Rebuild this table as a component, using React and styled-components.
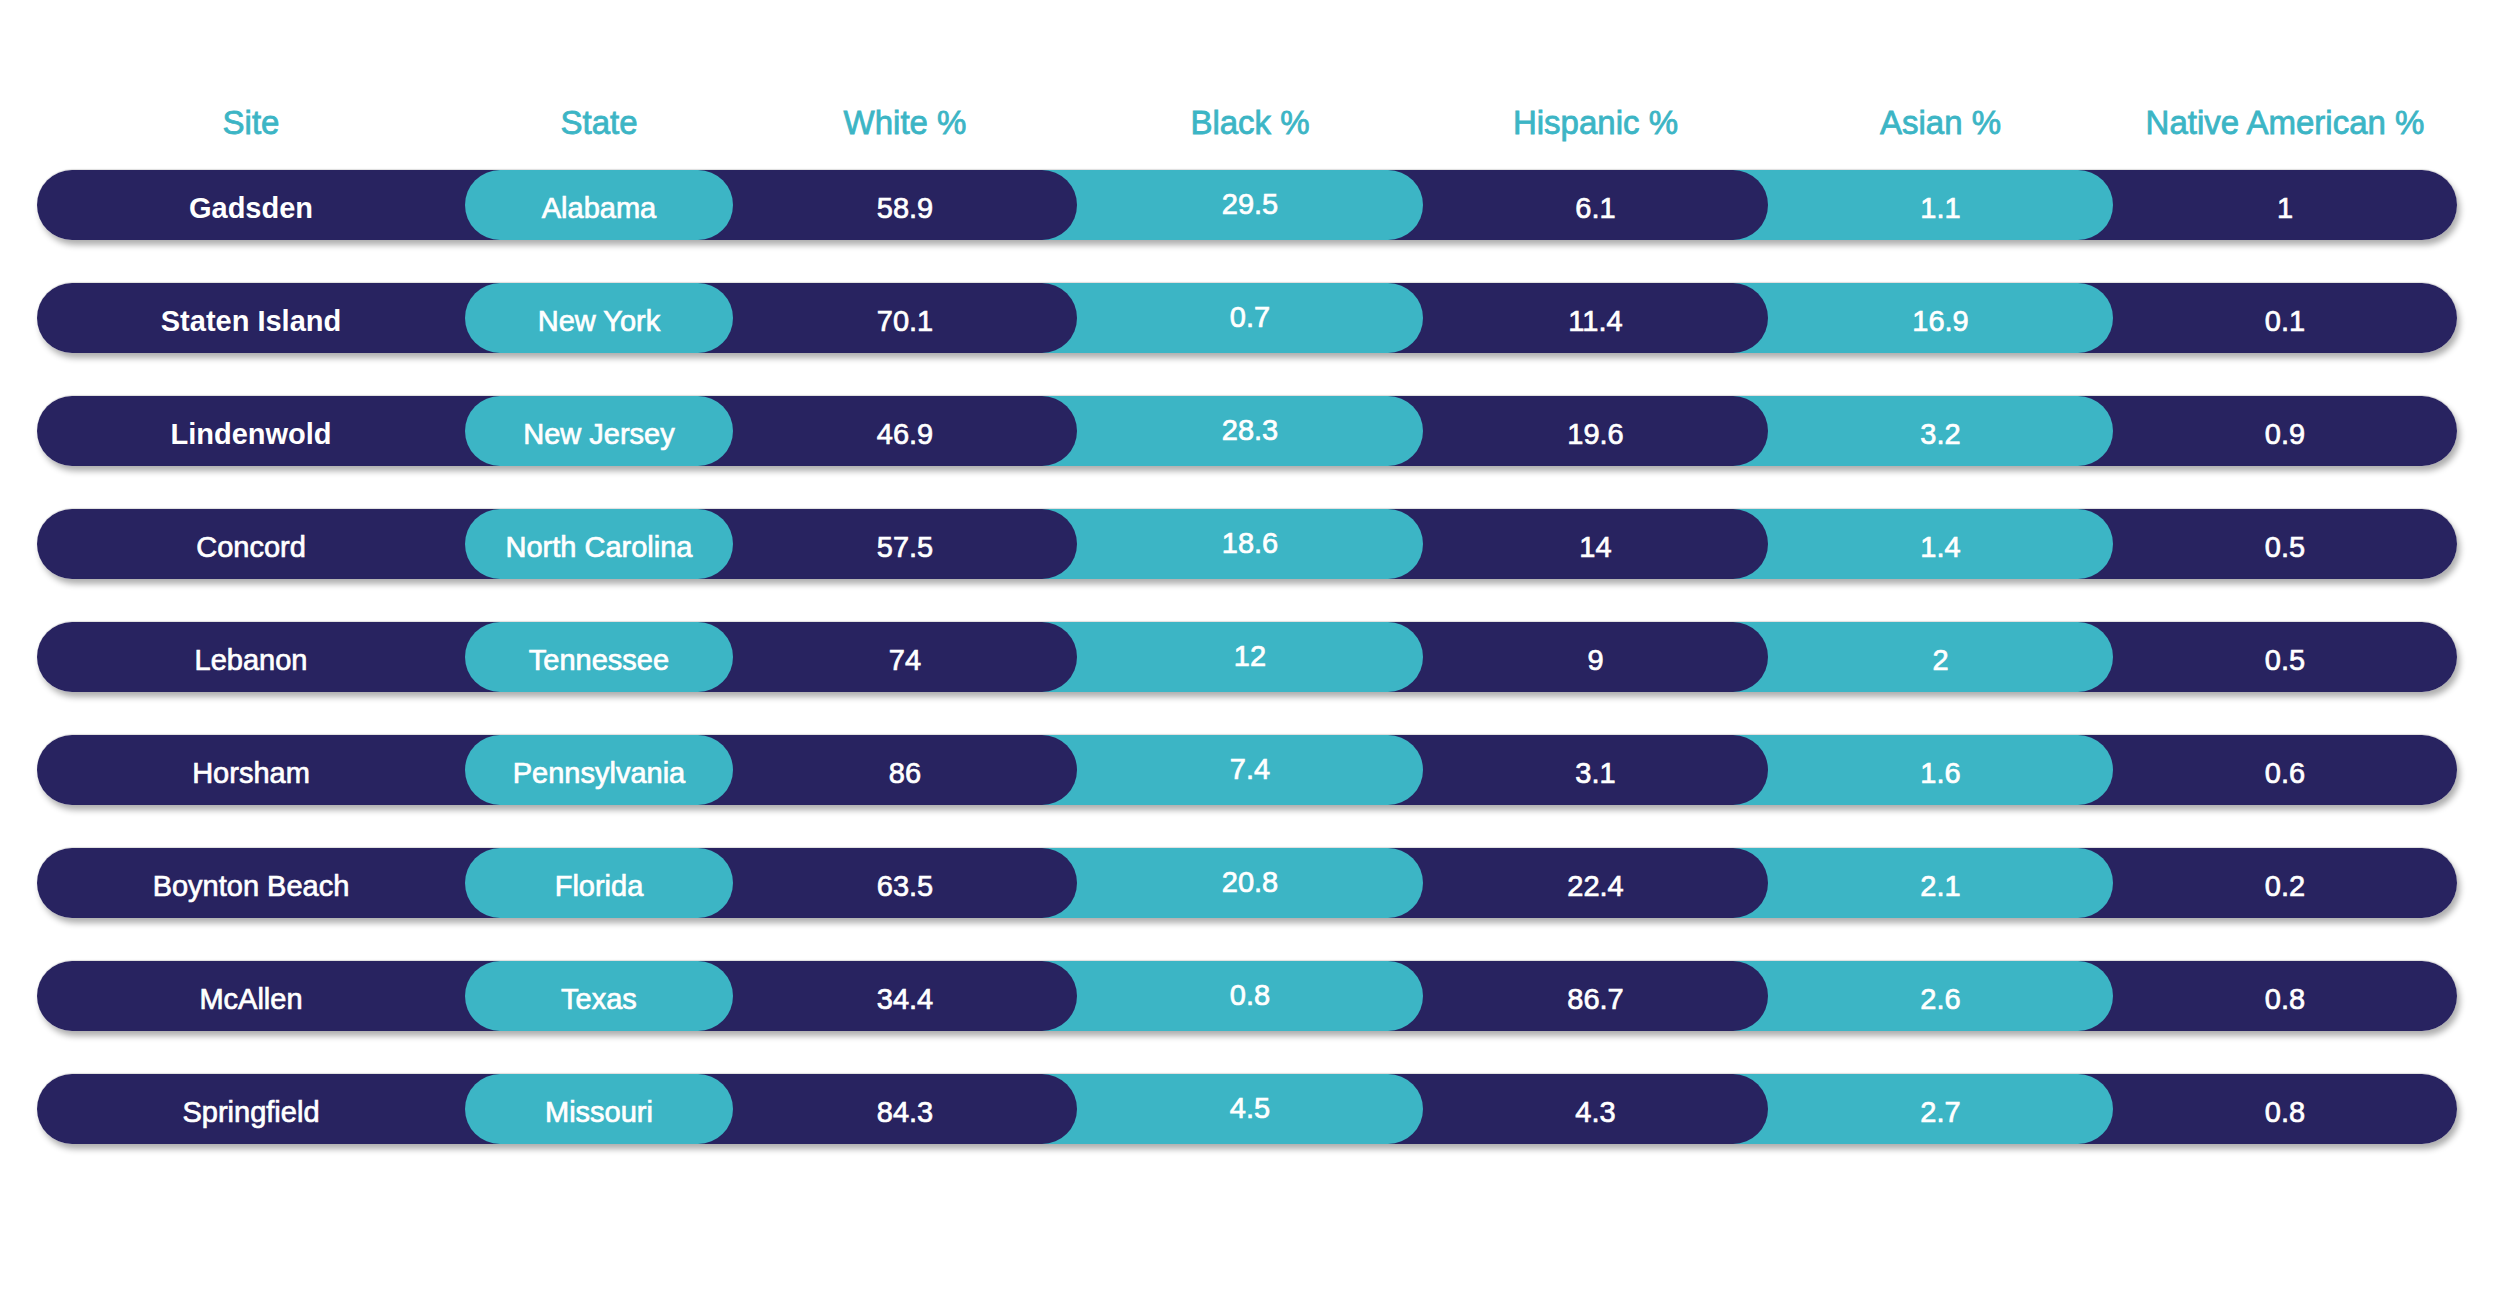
import React from "react";
import styled, { createGlobalStyle } from "styled-components";

const NAVY = "#282360";
const TEAL = "#3cb5c5";
const R = 35;

const GlobalStyle = createGlobalStyle`
  html, body {
    margin: 0;
    padding: 0;
    background: #ffffff;
  }
  body {
    font-family: "Liberation Sans", Arial, sans-serif;
  }
`;

const Page = styled.main`
  width: 2500px;
  min-height: 1309px;
  box-sizing: border-box;
  padding: 103px 0 0 37px;
  background: #ffffff;
`;

const HeaderRow = styled.div`
  display: grid;
  grid-template-columns: 428px 268px 344px 346px 345px 345px 344px;
  width: 2420px;
  margin-bottom: 27px;
`;

const HeaderCell = styled.div`
  text-align: center;
  font-size: 33px;
  line-height: 40px;
  color: ${TEAL};
  font-weight: 400;
  -webkit-text-stroke: 0.8px ${TEAL};
  white-space: nowrap;
`;

const Rows = styled.div`
  display: flex;
  flex-direction: column;
  gap: 43px;
`;

const Row = styled.div`
  display: flex;
  width: 2420px;
  height: 70px;
  border-radius: ${R}px;
  isolation: isolate;
  box-shadow: 3px 5px 6px rgba(0, 0, 0, 0.32), 0 -1px 1px rgba(0, 0, 0, 0.12);
`;

const Segment = styled.div`
  position: relative;
  z-index: ${(p) => p.$layer};
  flex: 0 0 auto;
  box-sizing: border-box;
  width: ${(p) => p.$w}px;
  height: 70px;
  display: flex;
  align-items: center;
  justify-content: center;
  background: ${(p) => (p.$tone === "teal" ? TEAL : NAVY)};
  color: #ffffff;
  font-size: 29px;
  line-height: 34px;
  white-space: nowrap;
  font-weight: ${(p) => (p.$bold ? 700 : 400)};
  -webkit-text-stroke: ${(p) => (p.$bold ? "0" : "0.7px #ffffff")};
  padding-top: ${(p) => (p.$lift ? 0 : 6)}px;
  padding-bottom: ${(p) => (p.$lift ? 2 : 0)}px;
`;

const SiteSeg = styled(Segment)`
  border-radius: ${R}px 0 0 ${R}px;
  margin-right: -${R}px;
  padding-right: ${R}px;
`;

const StatePill = styled(Segment)`
  border-radius: ${R}px;
`;

const TailSeg = styled(Segment)`
  border-radius: 0 ${R}px ${R}px 0;
  margin-left: -${R}px;
  padding-left: ${R}px;
`;

const headers = [
  "Site",
  "State",
  "White %",
  "Black %",
  "Hispanic %",
  "Asian %",
  "Native American %",
];

const data = [
  ["Gadsden", "Alabama", "58.9", "29.5", "6.1", "1.1", "1", true],
  ["Staten Island", "New York", "70.1", "0.7", "11.4", "16.9", "0.1", true],
  ["Lindenwold", "New Jersey", "46.9", "28.3", "19.6", "3.2", "0.9", true],
  ["Concord", "North Carolina", "57.5", "18.6", "14", "1.4", "0.5", false],
  ["Lebanon", "Tennessee", "74", "12", "9", "2", "0.5", false],
  ["Horsham", "Pennsylvania", "86", "7.4", "3.1", "1.6", "0.6", false],
  ["Boynton Beach", "Florida", "63.5", "20.8", "22.4", "2.1", "0.2", false],
  ["McAllen", "Texas", "34.4", "0.8", "86.7", "2.6", "0.8", false],
  ["Springfield", "Missouri", "84.3", "4.5", "4.3", "2.7", "0.8", false],
];

const tail = [
  { w: 344, tone: "navy", layer: 6 },
  { w: 346, tone: "teal", layer: 5, lift: true },
  { w: 345, tone: "navy", layer: 4 },
  { w: 345, tone: "teal", layer: 3 },
  { w: 344, tone: "navy", layer: 2 },
];

export default function App() {
  return (
    <>
      <GlobalStyle />
      <Page>
        <HeaderRow>
          {headers.map((h) => (
            <HeaderCell key={h}>{h}</HeaderCell>
          ))}
        </HeaderRow>
        <Rows>
          {data.map((r) => {
            const [site, state, ...rest] = r;
            const bold = r[7];
            const values = rest.slice(0, 5);
            return (
              <Row key={site}>
                <SiteSeg $w={428 + R} $tone="navy" $layer={1} $bold={bold}>
                  {site}
                </SiteSeg>
                <StatePill $w={268} $tone="teal" $layer={10}>
                  {state}
                </StatePill>
                {values.map((v, i) => (
                  <TailSeg
                    key={i}
                    $w={tail[i].w + R}
                    $tone={tail[i].tone}
                    $layer={tail[i].layer}
                    $lift={tail[i].lift}
                  >
                    {v}
                  </TailSeg>
                ))}
              </Row>
            );
          })}
        </Rows>
      </Page>
    </>
  );
}
